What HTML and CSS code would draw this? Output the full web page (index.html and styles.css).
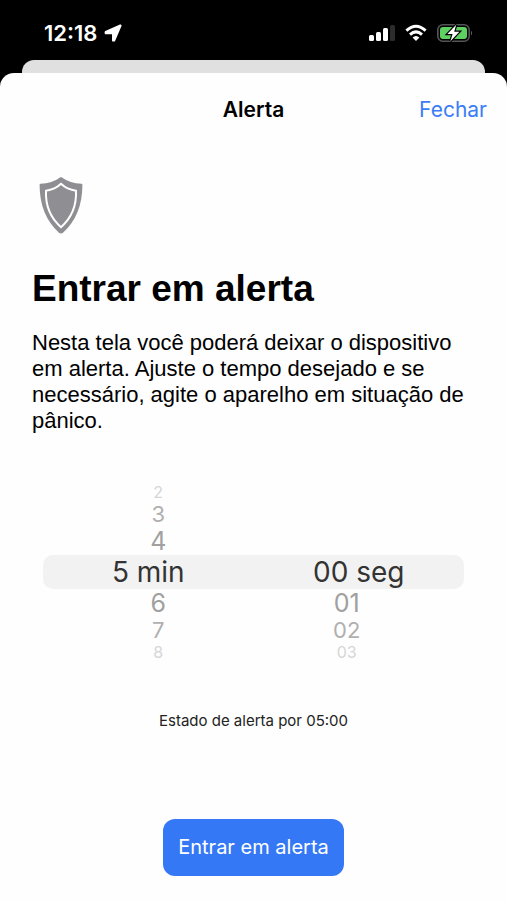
FILE: index.html
```
<!DOCTYPE html>
<html lang="pt-BR">
<head>
    <meta charset="UTF-8">
    <meta name="viewport" content="width=device-width, initial-scale=1.0">
    <title>Alerta</title>
    <link rel="stylesheet" href="styles.css">
</head>
<body>
    <div class="status-bar">
        <div class="status-time">
            <span>12:18</span>
            <svg width="18" height="18" viewBox="0 0 18 18" aria-hidden="true">
                <path d="M16.4 1.6L1.8 8.2V9H9.2V16.4H10Z" fill="#fff" stroke="#fff" stroke-width="2.4" stroke-linejoin="round"/>
            </svg>
        </div>
        <div class="status-icons">
            <svg width="26" height="18" viewBox="0 0 26 18" aria-hidden="true">
                <rect x="0" y="11" width="5" height="6" rx="1.5" fill="#fff"/>
                <rect x="7" y="8" width="5" height="9" rx="1.5" fill="#fff"/>
                <rect x="14" y="4" width="5" height="13" rx="1.5" fill="#fff"/>
                <rect x="21" y="1" width="5" height="16" rx="1.5" fill="#2c2c2c"/>
            </svg>
            <svg width="22" height="18" viewBox="0 0 22 18" fill="none" stroke="#fff" stroke-width="3" aria-hidden="true">
                <path d="M1.4 6.6Q11-2.2 20.6 6.6"/>
                <path d="M5 10.6Q11 5.2 17 10.6"/>
                <path d="M7.6 13.4Q11 10.4 14.4 13.4L11 17Z" fill="#fff" stroke="none"/>
            </svg>
            <svg width="36" height="18" viewBox="0 0 36 18" aria-hidden="true">
                <rect x=".8" y=".8" width="31.4" height="16.4" rx="5" fill="none" stroke="#555" stroke-width="1.6"/>
                <path d="M34 6.4Q36 9 34 11.6Z" fill="#666"/>
                <rect x="3" y="3" width="27" height="12" rx="3" fill="#5fd163"/>
                <path d="M19.2 .8L10.4 10H15.6L13.4 17.2L22.4 7.8H17.2Z" fill="#fff" stroke="#000" stroke-width="2.4" paint-order="stroke"/>
            </svg>
        </div>
    </div>

    <div class="back-sheet"></div>

    <main class="sheet">
        <header class="nav">
            <h1 class="nav-title">Alerta</h1>
            <a class="nav-close" href="#">Fechar</a>
        </header>

        <section class="intro">
            <svg class="shield" width="44" height="58" viewBox="0 0 44 58" aria-hidden="true">
                <path d="M21 .4Q22 -.2 23 .4Q31 6.4 42.4 6.8Q43.4 6.8 43.4 8Q43.4 38 24 55.8Q22 57.4 20 55.8Q.6 38 .6 8Q.6 6.8 1.6 6.8Q13 6.4 21 .4Z" fill="#8e8e93"/>
                <path d="M22 6.8Q28 12.6 37 13.8Q38 36 22 50.2Q6 36 7 13.8Q16 12.6 22 6.8Z" fill="none" stroke="#fff" stroke-width="2"/>
            </svg>
            <h2>Entrar em alerta</h2>
            <p>Nesta tela você poderá deixar o dispositivo em alerta. Ajuste o tempo desejado e se necessário, agite o aparelho em situação de pânico.</p>
        </section>

        <form class="alert-form">
            <div class="picker">
                <fieldset class="wheel minutes" aria-label="Minutos">
                    <label class="far"><input type="radio" name="min" value="2">2</label>
                    <label class="mid"><input type="radio" name="min" value="3">3</label>
                    <label class="near"><input type="radio" name="min" value="4">4</label>
                    <label class="selected"><input type="radio" name="min" value="5" checked>5 min</label>
                    <label class="near"><input type="radio" name="min" value="6">6</label>
                    <label class="mid"><input type="radio" name="min" value="7">7</label>
                    <label class="far"><input type="radio" name="min" value="8">8</label>
                </fieldset>
                <fieldset class="wheel seconds" aria-label="Segundos">
                    <label class="selected"><input type="radio" name="seg" value="0" checked>00 seg</label>
                    <label class="near"><input type="radio" name="seg" value="1">01</label>
                    <label class="mid"><input type="radio" name="seg" value="2">02</label>
                    <label class="far"><input type="radio" name="seg" value="3">03</label>
                </fieldset>
            </div>
            <p class="summary">Estado de alerta por 05:00</p>
            <button class="submit" type="button">Entrar em alerta</button>
        </form>
    </main>
</body>
</html>
```

FILE: styles.css
```
* {
    margin: 0;
    padding: 0;
    box-sizing: border-box;
}

body {
    display: flex;
    flex-direction: column;
    min-height: 100vh;
    background: #000;
    color: #000;
    font-family: Inter, "Liberation Sans", sans-serif;
}

.status-bar {
    display: flex;
    justify-content: space-between;
    align-items: center;
    height: 60px;
    padding: 6px 34px 0 44px;
    color: #fff;
}

.status-time {
    display: flex;
    align-items: center;
    gap: 7px;
    font-size: 22px;
    font-weight: 600;
}

.status-icons {
    display: flex;
    align-items: center;
    gap: 10px;
}

.back-sheet {
    height: 13px;
    margin: 0 22px;
    background: #e0e0e0;
    border-radius: 12px 12px 0 0;
}

.sheet {
    display: flex;
    flex: 1;
    flex-direction: column;
    background: #fefefe;
    border-radius: 14px 14px 0 0;
}

.nav {
    display: grid;
    grid-template-columns: 1fr auto 1fr;
    align-items: center;
    height: 72px;
    padding: 0 20px;
    font-size: 21px;
}

.nav-title {
    grid-column: 2;
    font-size: 21px;
    font-weight: 600;
}

.nav-close {
    justify-self: end;
    color: #3b7df6;
    text-decoration: none;
}

.intro {
    padding: 32px 32px 0;
    font-family: "Liberation Sans", sans-serif;
}

.shield {
    display: block;
    margin: 0 7px 32px;
}

.intro h2 {
    margin-bottom: 19px;
    font-size: 37px;
    line-height: 44px;
}

.intro p {
    font-size: 22px;
    line-height: 26px;
}

.alert-form {
    display: flex;
    flex: 1;
    flex-direction: column;
    align-items: center;
    padding: 49px 43px 24px;
}

.picker {
    display: grid;
    grid-template-columns: 1fr 1fr;
    align-items: end;
    align-self: stretch;
}

.wheel {
    min-width: 0;
    border: 0;
    text-align: center;
}

.wheel label {
    display: block;
    cursor: pointer;
}

.wheel input {
    appearance: none;
    position: absolute;
}

.minutes label {
    padding-left: 20px;
}

.seconds label {
    padding-right: 24px;
}

.wheel .selected {
    padding: 0;
    background: #f2f2f2;
    color: #333;
    font-size: 28px;
    line-height: 34px;
}

.minutes .selected {
    border-radius: 10px 0 0 10px;
}

.seconds .selected {
    border-radius: 0 10px 10px 0;
}

.wheel .near {
    color: #a0a0a0;
    font-size: 25px;
    line-height: 28px;
}

.wheel .mid {
    color: #b0b0b0;
    font-size: 22px;
    line-height: 26px;
}

.wheel .far {
    color: #d6d6d6;
    font-size: 16px;
    line-height: 18px;
}

.summary {
    margin: 50px 0 auto;
    color: #222;
    font-size: 15px;
    line-height: 20px;
}

.submit {
    padding: 16px 15px;
    border: 0;
    border-radius: 12px;
    background: #3478f6;
    color: #fff;
    font-family: inherit;
    font-size: 20px;
    line-height: 25px;
    cursor: pointer;
}
```
